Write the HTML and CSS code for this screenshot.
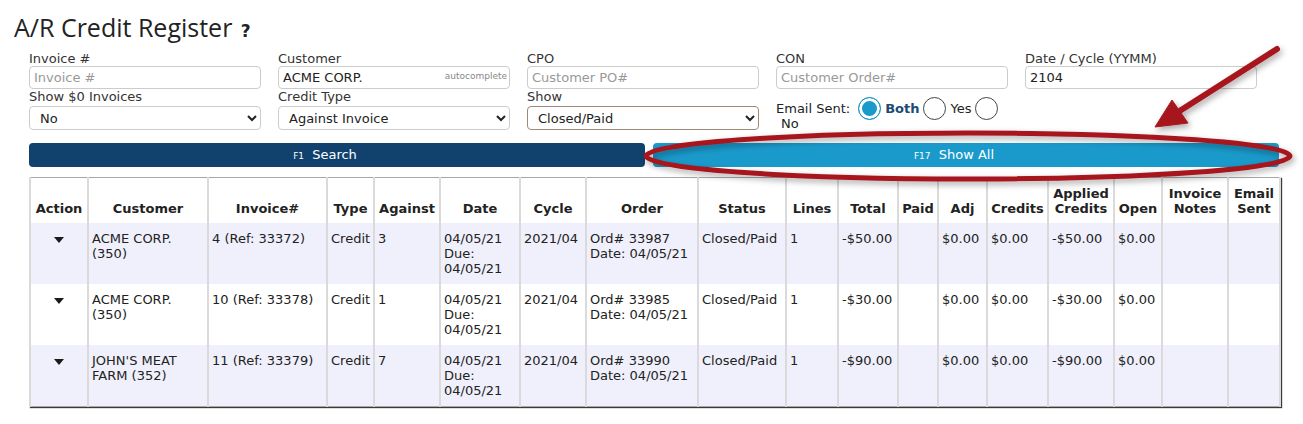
FILE: index.html
```html
<!DOCTYPE html>
<html lang="en">
<head>
  <meta charset="UTF-8" />
  <title>A/R Credit Register</title>
  <link rel="stylesheet" href="styles.css">
</head>
<body>
  <div class="page">
    <h1 class="title">A/R Credit Register <span class="help">?</span></h1>

    <form class="filters">
      <div class="field">
        <label>Invoice #</label>
        <input type="text" placeholder="Invoice #">
      </div>
      <div class="field">
        <label>Customer</label>
        <div class="autocomplete">
          <input type="text" value="ACME CORP.">
          <span class="hint">autocomplete</span>
        </div>
      </div>
      <div class="field">
        <label>CPO</label>
        <input type="text" placeholder="Customer PO#">
      </div>
      <div class="field">
        <label>CON</label>
        <input type="text" placeholder="Customer Order#">
      </div>
      <div class="field">
        <label>Date / Cycle (YYMM)</label>
        <input type="text" value="2104">
      </div>

      <div class="field">
        <label>Show $0 Invoices</label>
        <select><option>No</option><option>Yes</option></select>
      </div>
      <div class="field">
        <label>Credit Type</label>
        <select><option>Against Invoice</option></select>
      </div>
      <div class="field">
        <label>Show</label>
        <select class="active"><option>Closed/Paid</option></select>
      </div>
      <div class="field email">
        <div class="email-row">
          <span>Email Sent:</span>
          <input type="radio" name="sent" checked>
          <span class="on">Both</span>
          <input type="radio" name="sent">
          <span>Yes</span>
          <input type="radio" name="sent">
        </div>
        <div class="email-no">No</div>
      </div>
    </form>

    <div class="actions">
      <button class="btn btn-search"><small>F1</small> Search</button>
      <button class="btn btn-all"><small>F17</small> Show All</button>
    </div>

    <table class="register">
      <colgroup>
        <col style="width:58px"><col style="width:120px"><col style="width:119px"><col style="width:47px">
        <col style="width:66px"><col style="width:80px"><col style="width:66px"><col style="width:112px">
        <col style="width:88px"><col style="width:52px"><col style="width:60px"><col style="width:40px">
        <col style="width:49px"><col style="width:61px"><col style="width:66px"><col style="width:48px">
        <col style="width:66px"><col style="width:52px">
      </colgroup>
      <thead>
        <tr>
          <th>Action</th><th>Customer</th><th>Invoice#</th><th>Type</th><th>Against</th><th>Date</th>
          <th>Cycle</th><th>Order</th><th>Status</th><th>Lines</th><th>Total</th><th>Paid</th>
          <th>Adj</th><th>Credits</th><th>Applied<br>Credits</th><th>Open</th><th>Invoice<br>Notes</th><th>Email<br>Sent</th>
        </tr>
      </thead>
      <tbody>
        <tr>
          <td class="act"><span class="caret"></span></td>
          <td>ACME CORP.<br>(350)</td><td>4 (Ref: 33372)</td><td>Credit</td><td>3</td>
          <td>04/05/21<br>Due:<br>04/05/21</td><td>2021/04</td><td>Ord# 33987<br>Date: 04/05/21</td>
          <td>Closed/Paid</td><td>1</td><td>-$50.00</td><td></td><td>$0.00</td><td>$0.00</td>
          <td>-$50.00</td><td>$0.00</td><td></td><td></td>
        </tr>
        <tr>
          <td class="act"><span class="caret"></span></td>
          <td>ACME CORP.<br>(350)</td><td>10 (Ref: 33378)</td><td>Credit</td><td>1</td>
          <td>04/05/21<br>Due:<br>04/05/21</td><td>2021/04</td><td>Ord# 33985<br>Date: 04/05/21</td>
          <td>Closed/Paid</td><td>1</td><td>-$30.00</td><td></td><td>$0.00</td><td>$0.00</td>
          <td>-$30.00</td><td>$0.00</td><td></td><td></td>
        </tr>
        <tr>
          <td class="act"><span class="caret"></span></td>
          <td>JOHN'S MEAT<br>FARM (352)</td><td>11 (Ref: 33379)</td><td>Credit</td><td>7</td>
          <td>04/05/21<br>Due:<br>04/05/21</td><td>2021/04</td><td>Ord# 33990<br>Date: 04/05/21</td>
          <td>Closed/Paid</td><td>1</td><td>-$90.00</td><td></td><td>$0.00</td><td>$0.00</td>
          <td>-$90.00</td><td>$0.00</td><td></td><td></td>
        </tr>
      </tbody>
    </table>
  </div>

  <!-- annotation drawn over the screenshot -->
  <svg class="markup" width="1303" height="424" viewBox="0 0 1303 424">
    <defs>
      <filter id="soft" x="-10%" y="-50%" width="120%" height="200%">
        <feDropShadow dx="2" dy="3" stdDeviation="3" flood-color="#000" flood-opacity="0.35"/>
      </filter>
    </defs>
    <g filter="url(#soft)" fill="none" stroke="#a6161f">
      <ellipse cx="968" cy="156" rx="322" ry="23" stroke-width="5"/>
      <line x1="1277" y1="49" x2="1178" y2="112" stroke-width="6" stroke-linecap="round"/>
      <polygon points="1155,127 1172,100 1188,123" fill="#a6161f" stroke-width="1"/>
    </g>
  </svg>
</body>
</html>
```

FILE: styles.css
```css
body {
  margin: 0;
  font-family: "DejaVu Sans", Verdana, sans-serif;
  font-size: 13px;
  color: #222;
  background: #fff;
}

.page {
  padding: 10px 14px;
}

.title {
  height: 34px;
  margin: 0;
  font-family: "Open Sans", sans-serif;
  font-size: 25px;
  font-weight: 400;
  line-height: 34px;
  color: #222;
}

.help {
  font-family: "DejaVu Sans", sans-serif;
  font-weight: 700;
  font-size: 17px;
  line-height: 1;
  margin-left: 2px;
}

.filters {
  display: grid;
  grid-template-columns: repeat(5, 232px);
  column-gap: 17px;
  margin: 7px 0 0 15px;
}

.field label {
  display: block;
  line-height: 15px;
  color: #333;
}

.field input[type="text"] {
  display: block;
  box-sizing: border-box;
  width: 100%;
  height: 23px;
  padding: 0 4px;
  border: 1px solid #ccc;
  border-radius: 4px;
  font-family: inherit;
  font-size: 13px;
  color: #222;
}

.field input::placeholder {
  color: #999;
}

.autocomplete {
  position: relative;
}

.autocomplete .hint {
  position: absolute;
  right: 3px;
  top: 5px;
  font-size: 9px;
  color: #888;
}

.field select {
  display: block;
  box-sizing: border-box;
  width: 100%;
  height: 24px;
  margin-top: 2px;
  padding: 0 6px;
  border: 1px solid #ccc;
  border-radius: 4px;
  background: #fff;
  font-family: inherit;
  font-size: 13px;
  color: #222;
}

.field select.active {
  border-color: #a08878;
}

.email {
  padding-top: 7px;
}

.email-row {
  display: flex;
  align-items: center;
  height: 24px;
}

.email-row input[type="radio"] {
  appearance: none;
  box-sizing: border-box;
  width: 23px;
  height: 23px;
  margin: 0 4px;
  border: 1px solid #444;
  border-radius: 50%;
  background: #fff;
}

.email-row input[type="radio"]:first-of-type {
  margin-left: 8px;
}

.email-row input[type="radio"]:checked {
  border: 1px solid #1a8fc4;
  background: #1a9acb;
  box-shadow: inset 0 0 0 3px #fff;
}

.email-row .on {
  font-weight: 700;
  color: #1d4a72;
}

.email-no {
  margin-top: -4px;
  padding-left: 5px;
  line-height: 15px;
}

.actions {
  display: grid;
  grid-template-columns: 616px 626px;
  column-gap: 8px;
  width: 1250px;
  margin: 12px 0 0 15px;
}

.btn {
  display: block;
  height: 24px;
  padding: 0 24px 0 0;
  border: none;
  border-radius: 4px;
  color: #fff;
  font-family: inherit;
  font-size: 13px;
  line-height: 24px;
}

.btn small {
  font-size: 9px;
  margin-right: 4px;
}

.btn-search {
  background: #10426d;
}

.btn-all {
  background: #1a9acb;
}

.register {
  table-layout: fixed;
  width: 1250px;
  margin: 10px 0 0 15px;
  border-collapse: collapse;
  border: 1px solid #a8a8a8;
  box-shadow: 1px 1px 1px #3a3a3a;
}

.register th,
.register td {
  border-left: 2px solid #dadada;
  border-right: 2px solid #dadada;
  line-height: 15px;
}

.register th {
  height: 28px;
  padding: 8px 2px 7px;
  vertical-align: bottom;
  font-weight: 700;
  text-align: center;
  background: #fff;
}

.register td {
  height: 45px;
  padding: 8px 3px;
  vertical-align: top;
  text-align: left;
}

.register tbody tr:nth-child(odd) td {
  background: #f0f0fc;
}

.register tbody tr:nth-child(even) td {
  background: #fff;
}

.register td.act {
  text-align: center;
}

.caret {
  display: inline-block;
  margin-top: 5px;
  border-left: 5px solid transparent;
  border-right: 5px solid transparent;
  border-top: 6px solid #1a1a1a;
}

.markup {
  position: absolute;
  top: 0;
  left: 0;
  pointer-events: none;
}
```
